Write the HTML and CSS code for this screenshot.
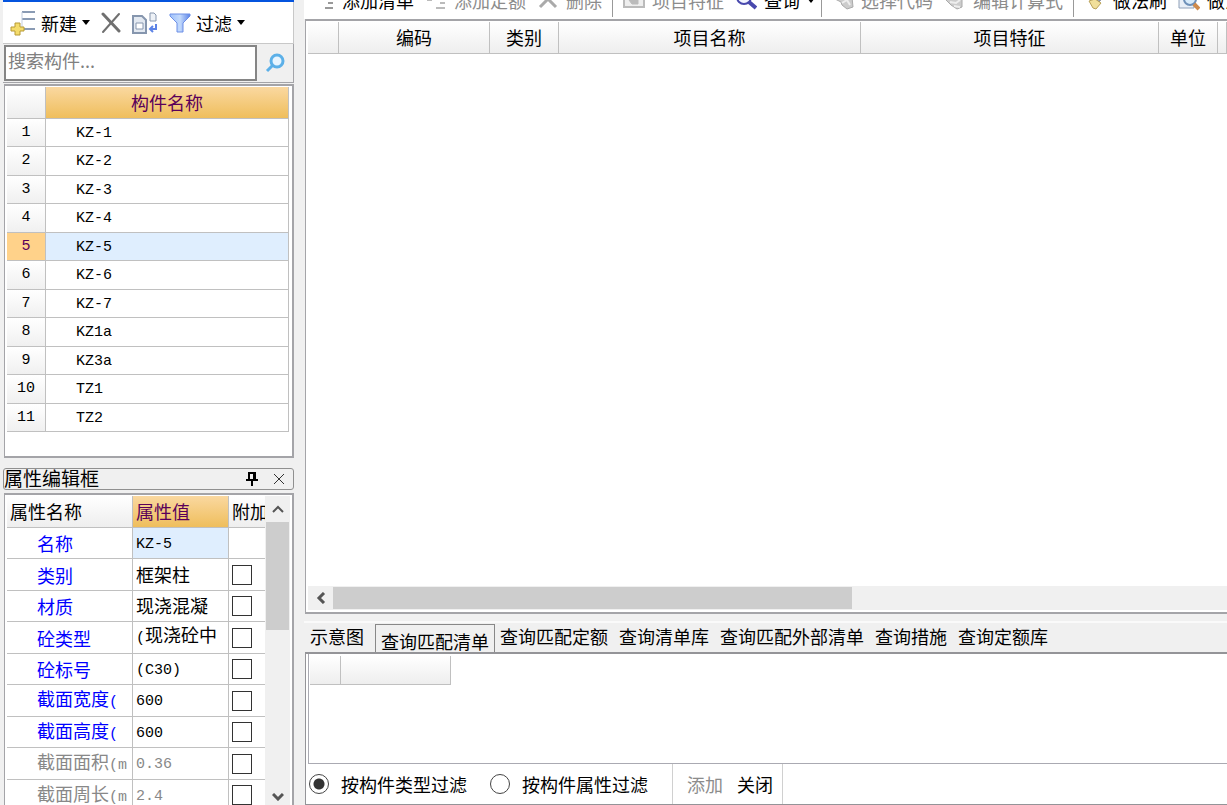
FILE: index.html
```html
<!DOCTYPE html>
<html lang="zh-CN">
<head>
<meta charset="utf-8">
<title>构件做法</title>
<link rel="stylesheet" href="styles.css">
</head>
<body>
<div class="app">
  <aside class="side">
    <section class="components">
      <div class="side-tools">
        <button class="tool" type="button">
          <svg width="26" height="26" viewBox="0 0 26 26" fill="none"><path d="M12 2h13M12 9h13M12 19h13" stroke="#8a9bb4" stroke-width="2"/><path d="M12 2v17" stroke="#c3cede"/><path d="M5 13h5v4h4v4h-4v4H5v-4H1v-4h4z" fill="#f4dc6c" stroke="#b79a35"/></svg>
          <span>新建</span><i class="caret"></i>
        </button>
        <button class="tool" type="button" aria-label="删除">
          <svg width="20" height="22" viewBox="0 0 20 22" fill="none" stroke="#707070" stroke-linecap="round"><path d="M2 2l16 17" stroke-width="3"/><path d="M18 2L2 20" stroke-width="2"/></svg>
        </button>
        <button class="tool" type="button" aria-label="复制">
          <svg width="26" height="22" viewBox="0 0 26 22" fill="none"><path d="M1 4h9l4 4v13H1z" fill="#e3e9f1" stroke="#8696ae" stroke-width="2"/><path d="M4 11h7v6H4z" fill="#fff" stroke="#8696ae"/><path d="M18 1h4l2 2v6h-6z" fill="#eef2f7" stroke="#8696ae"/><path d="M24 12v5h-6m3-3l-3 3 3 3" stroke="#5d83e6" stroke-width="2"/></svg>
        </button>
        <button class="tool" type="button">
          <svg width="22" height="20" viewBox="0 0 22 20"><defs><linearGradient id="funnel"><stop offset="0" stop-color="#9fc1fb"/><stop offset=".5" stop-color="#c3dafc"/><stop offset="1" stop-color="#5b83e8"/></linearGradient></defs><path d="M1 1h20v2l-7 7v9H8v-9L1 3z" fill="url(#funnel)" stroke="#6d8fe6"/></svg>
          <span>过滤</span><i class="caret"></i>
        </button>
      </div>
      <div class="search">
        <input type="text" placeholder="搜索构件..." aria-label="搜索构件">
        <button type="button" aria-label="搜索">
          <svg width="20" height="20" viewBox="0 0 20 20" fill="none" stroke="#5cb0e8"><circle cx="12" cy="8" r="6" fill="#e8f5ff" stroke-width="3"/><path d="M8 12l-6 6" stroke-width="3"/></svg>
        </button>
      </div>
      <div class="frame list-frame">
        <table class="list">
          <thead><tr><th class="num"></th><th>构件名称</th></tr></thead>
          <tbody>
            <tr><th>1</th><td>KZ-1</td></tr>
            <tr><th>2</th><td>KZ-2</td></tr>
            <tr><th>3</th><td>KZ-3</td></tr>
            <tr><th>4</th><td>KZ-4</td></tr>
            <tr class="selected"><th>5</th><td>KZ-5</td></tr>
            <tr><th>6</th><td>KZ-6</td></tr>
            <tr><th>7</th><td>KZ-7</td></tr>
            <tr><th>8</th><td>KZ1a</td></tr>
            <tr><th>9</th><td>KZ3a</td></tr>
            <tr><th>10</th><td>TZ1</td></tr>
            <tr><th>11</th><td>TZ2</td></tr>
          </tbody>
        </table>
      </div>
    </section>
    <section class="properties">
      <header class="dock-title">
        <h2>属性编辑框</h2>
        <button type="button" aria-label="固定"><svg width="12" height="14" viewBox="0 0 12 14" fill="none" stroke="#000"><path d="M3 8V1h6v7" stroke-width="2"/><path d="M0 8h12M6 9v5" stroke-width="2"/><path d="M8 1v7" stroke-width="2"/></svg></button>
        <button type="button" aria-label="关闭"><svg width="12" height="12" viewBox="0 0 12 12" fill="none" stroke="#333"><path d="M1 1l10 10M11 1L1 11"/></svg></button>
      </header>
      <div class="frame prop-frame">
        <div class="prop-clip">
          <table class="props">
            <thead><tr><th class="name">属性名称</th><th class="value">属性值</th><th class="extra">附加</th></tr></thead>
            <tbody>
              <tr><th>名称</th><td class="active"><span class="latin">KZ-5</span></td><td></td></tr>
              <tr><th>类别</th><td>框架柱</td><td><input type="checkbox" aria-label="附加类别"></td></tr>
              <tr><th>材质</th><td>现浇混凝</td><td><input type="checkbox" aria-label="附加材质"></td></tr>
              <tr><th>砼类型</th><td><span class="latin">(</span>现浇砼中</td><td><input type="checkbox" aria-label="附加砼类型"></td></tr>
              <tr><th>砼标号</th><td><span class="latin">(C30)</span></td><td><input type="checkbox" aria-label="附加砼标号"></td></tr>
              <tr><th>截面宽度<span class="latin">(</span></th><td><span class="latin">600</span></td><td><input type="checkbox" aria-label="附加截面宽度"></td></tr>
              <tr><th>截面高度<span class="latin">(</span></th><td><span class="latin">600</span></td><td><input type="checkbox" aria-label="附加截面高度"></td></tr>
              <tr class="readonly"><th>截面面积<span class="latin">(m</span></th><td><span class="latin">0.36</span></td><td><input type="checkbox" aria-label="附加截面面积"></td></tr>
              <tr class="readonly"><th>截面周长<span class="latin">(m</span></th><td><span class="latin">2.4</span></td><td><input type="checkbox" aria-label="附加截面周长"></td></tr>
            </tbody>
          </table>
        </div>
        <div class="vscroll">
          <button type="button" aria-label="向上"><svg width="12" height="8" viewBox="0 0 12 8" fill="none" stroke="#555" stroke-width="2"><path d="M1 7l5-5 5 5"/></svg></button>
          <div class="vthumb"></div>
          <button type="button" aria-label="向下"><svg width="12" height="8" viewBox="0 0 12 8" fill="none" stroke="#555" stroke-width="3"><path d="M1 1l5 5 5-5"/></svg></button>
        </div>
      </div>
    </section>
  </aside>

  <main class="main">
    <div class="main-tools">
      <button class="tool" type="button"><svg width="22" height="22" viewBox="0 0 22 22" fill="none" stroke="#999"><path d="M12 4h10M12 10h8M15 14h5M12 19h8" stroke-width="2"/></svg><span>添加清单</span></button>
      <button class="tool" type="button" disabled><svg width="22" height="22" viewBox="0 0 22 22" fill="none" stroke="#bbb"><path d="M12 4h10M12 10h8M15 14h5M11 19h9M2 11h5" stroke-width="2"/></svg><span>添加定额</span></button>
      <button class="tool" type="button" disabled><svg width="22" height="22" viewBox="0 0 22 22" fill="none" stroke="#aaa" stroke-width="3"><path d="M3 2l16 16M19 2L3 18"/></svg><span>删除</span></button>
      <i class="sep"></i>
      <button class="tool" type="button" disabled><svg width="22" height="22" viewBox="0 0 22 22" fill="none" stroke="#bbb"><path d="M1 3h20v15H1z" fill="#eee" stroke-width="2"/><path d="M9 15l-3-4 3-4v3h6v5z" fill="#bbb"/></svg><span>项目特征</span></button>
      <button class="tool" type="button"><svg width="22" height="22" viewBox="0 0 22 22" fill="none" stroke="#4848ad"><circle cx="9" cy="8" r="7" fill="#f2f5ff" stroke-width="2"/><path d="M14 13l7 6" stroke-width="4"/></svg><span>查询</span><i class="caret"></i></button>
      <i class="sep"></i>
      <button class="tool" type="button" disabled><svg width="22" height="22" viewBox="0 0 22 22"><path d="M1 9c4-3 8-2 11 1l8-2 1 10-6 2-5-4-1-3z" fill="#ccc" stroke="#aaa"/><path d="M10 14l5-3 3 5" fill="none" stroke="#eee" stroke-width="2"/></svg><span>选择代码</span></button>
      <button class="tool" type="button" disabled><svg width="22" height="22" viewBox="0 0 22 22"><path d="M1 10c4-3 8-2 10 0l7-2v10l-5 2-6-4z" fill="#ccc" stroke="#aaa"/><path d="M6 13l6 1 4-3M10 17l6 1" fill="none" stroke="#eee" stroke-width="2"/></svg><span>编辑计算式</span></button>
      <i class="sep"></i>
      <button class="tool" type="button"><svg width="22" height="22" viewBox="0 0 22 22"><path d="M12 10l7-9 3 3-7 9z" fill="#9ba4b8" stroke="#6e7688"/><path d="M5 12l6-2 6 4-5 6-3-1z" fill="#f1df9b" stroke="#b9a25a"/></svg><span>做法刷</span></button>
      <button class="tool" type="button"><svg width="22" height="22" viewBox="0 0 22 22" fill="none"><path d="M1 1h15v18H1z" fill="#e9eff7" stroke="#8fa0b8"/><circle cx="12" cy="10" r="6" fill="#d8ebfa" stroke="#6e90b8" stroke-width="2"/><path d="M16 15l5 5" stroke="#cf8a4b" stroke-width="4"/></svg><span>做法查询</span></button>
    </div>
    <div class="frame grid-frame">
      <div class="grid-clip">
        <table class="grid">
          <thead><tr><th class="c-mark"></th><th class="c-code">编码</th><th class="c-kind">类别</th><th class="c-name">项目名称</th><th class="c-feature">项目特征</th><th class="c-unit">单位</th><th></th></tr></thead>
        </table>
      </div>
      <div class="hscroll">
        <button type="button" aria-label="向左"><svg width="10" height="12" viewBox="0 0 10 12" fill="none" stroke="#555" stroke-width="3"><path d="M8 1L3 6l5 5"/></svg></button>
        <div class="htrack"><div class="hthumb"></div></div>
      </div>
    </div>
    <section class="query">
      <nav class="tabs">
        <button type="button">示意图</button>
        <button type="button" class="current">查询匹配清单</button>
        <button type="button">查询匹配定额</button>
        <button type="button">查询清单库</button>
        <button type="button">查询匹配外部清单</button>
        <button type="button">查询措施</button>
        <button type="button">查询定额库</button>
      </nav>
      <div class="query-body">
        <div class="result">
          <table class="result-head"><thead><tr><th class="c-mark"></th><th class="c-result"></th></tr></thead></table>
        </div>
        <div class="filters">
          <label><input type="radio" name="filter" checked>按构件类型过滤</label>
          <label><input type="radio" name="filter">按构件属性过滤</label>
          <div class="actions">
            <button type="button" disabled>添加</button>
            <button type="button">关闭</button>
          </div>
        </div>
      </div>
    </section>
  </main>
</div>
</body>
</html>
```
FILE: styles.css
```css
* { box-sizing: border-box; }

body {
  margin: 0;
  background: #f0f0f0;
  color: #000;
  font: 18px/22px "Noto Sans CJK SC", sans-serif;
}

button {
  display: flex;
  align-items: center;
  justify-content: center;
  flex: none;
  padding: 0;
  border: 0;
  background: none;
  color: inherit;
  font: inherit;
  white-space: nowrap;
}

button:disabled { color: #8c8c8c; }
svg { display: block; flex: none; }

table {
  border-collapse: separate;
  border-spacing: 0;
  table-layout: fixed;
  width: 100%;
}

th, td {
  padding: 0;
  font-weight: 400;
  white-space: nowrap;
  border: solid #c0c0c0;
  border-width: 0 1px 1px 0;
}

thead th { background: linear-gradient(#fff, #eee); }

.latin { font: 15px/20px "Liberation Mono", monospace; }

.app {
  display: flex;
  gap: 10px;
  height: 100vh;
  padding-left: 3px;
  overflow: hidden;
}

.side {
  display: flex;
  flex-direction: column;
  gap: 10px;
  flex: none;
  width: 291px;
}

.frame {
  border: 2px solid #a4a4a8;
  border-left-width: 1px;
  background: #fff;
}

/* Component list */
.components {
  border-top: 2px solid #0454de;
}

.side-tools {
  display: flex;
  align-items: center;
  gap: 11px;
  height: 42px;
  padding-left: 7px;
  background: #fff;
  border: solid #c8c8c8;
  border-width: 0 1px 1px 0;
}

.tool { gap: 5px; }

.caret {
  border: solid transparent;
  border-top-color: #000;
  border-width: 5px 4px 0;
}

.search {
  display: flex;
  height: 39px;
  padding: 1px 0 1px 1px;
  border: solid #a4a4a8;
  border-width: 0 1px 1px 0;
}

.search input {
  flex: 1;
  min-width: 0;
  padding: 0 2px 6px;
  border: 2px solid #858585;
  border-radius: 0;
  background: #fff;
  font: inherit;
  outline: 0;
}

.search input::placeholder { color: #808080; opacity: 1; }
.search button { width: 36px; }

.list-frame {
  margin: 1px 0 0 1px;
  padding: 1px 3px 24px 2px;
}

.list .num { width: 39px; }
.list thead th { height: 32px; padding-bottom: 2px; }

.list thead th + th {
  background: linear-gradient(#fad8a0, #efbe5c);
  color: #5a005a;
}

.list tbody { font: 15px/22px "Liberation Mono", monospace; }
.list tbody tr { height: 28px; }
.list tbody tr:nth-child(even) { height: 29px; }
.list tbody th { background: linear-gradient(#fff, #f0f0f0); }
.list td { padding: 2px 0 0 30px; }
.list .selected th { background: #ffd28a; color: #5a005a; }
.list .selected td { background: #dfeefe; }

/* Property editor */
.properties {
  display: flex;
  flex-direction: column;
  gap: 3px;
  flex: 1;
  min-height: 0;
}

.dock-title {
  display: flex;
  align-items: center;
  gap: 15px;
  height: 22px;
  padding-right: 8px;
  border: 1px solid #909090;
  border-radius: 3px;
}

.dock-title h2 {
  flex: 1;
  margin: 0;
  padding-bottom: 3px;
  font: 19px/20px "Noto Sans CJK SC", sans-serif;
}

.prop-frame {
  display: flex;
  flex: 1;
  min-height: 0;
  margin-left: 1px;
  padding: 1px 2px 0;
  border-bottom: 0;
}

.prop-clip {
  flex: 1;
  min-width: 0;
  overflow: hidden;
}

.props .name { width: 126px; }
.props .value { width: 96px; }
.props thead th { height: 32px; padding: 0 0 2px 3px; text-align: left; }
.props th:last-child, .props td:last-child { border-right: 0; }

.props thead .value {
  background: linear-gradient(#fad8a0, #efbe5c);
  color: #5a005a;
}

.props tbody tr { height: 31px; line-height: 20px; }
.props tbody tr:nth-child(even) { height: 32px; }
.props tbody th { padding-left: 30px; color: #00f; text-align: left; }
.props td { padding: 0 0 2px 3px; }
.props td:last-child { padding-bottom: 0; }
.props .active { background: #dfeefe; }
.props .readonly th, .props .readonly td { color: #888; }

.props input {
  display: block;
  appearance: none;
  width: 20px;
  height: 20px;
  margin: 0;
  border: 1px solid #333;
  background: #fff;
}

.vscroll {
  display: flex;
  flex-direction: column;
  width: 25px;
  background: #f0f0f0;
}

.vscroll button { height: 26px; }
.vscroll button:last-child { height: 16px; margin-top: auto; }
.vthumb { height: 108px; margin: 0 1px; background: #cdcdcd; }

/* Measure table */
.main {
  display: flex;
  flex-direction: column;
  flex: 1;
  min-width: 0;
}

.main-tools {
  display: flex;
  align-items: flex-end;
  gap: 11px;
  height: 19px;
  padding: 0 0 2px 9px;
  overflow: hidden;
  background: #fff;
}

.main-tools .tool { gap: 7px; margin-bottom: 6px; }
.main-tools .caret { margin-right: -4px; }
.sep { flex: none; width: 1px; height: 17px; margin: 0 -1px; background: #999; }

.grid-frame {
  display: flex;
  flex-direction: column;
  flex: 1;
  min-height: 0;
  margin-left: 1px;
  padding: 1px 0 2px 2px;
  border-right: 0;
}

.grid-clip { flex: 1; overflow: hidden; }
.grid th { height: 32px; padding-bottom: 1px; }
.c-mark { width: 31px; }
.c-code { width: 151px; }
.c-kind { width: 69px; }
.c-name { width: 302px; }
.c-feature { width: 298px; }
.c-unit { width: 59px; }

.hscroll { display: flex; height: 24px; background: #f0f0f0; }
.hscroll button { width: 25px; }
.htrack { flex: 1; padding: 1px 0; }
.hthumb { width: 58%; height: 22px; background: #cdcdcd; }

/* Query panel */
.query { margin-top: 7px; }

.tabs {
  display: flex;
  gap: 11px;
  height: 31px;
  padding-left: 6px;
  border-top: 2px solid #fafafa;
}

.tabs button { height: 25px; }

.tabs .current {
  height: 28px;
  margin: 1px -6px 0 0;
  padding: 4px 5px 0;
  border: 1px solid #888;
  border-bottom: 0;
}

.query-body {
  margin-left: 1px;
  padding-left: 2px;
  border: 2px solid #949498;
  border-width: 2px 0 1px 1px;
  background: #fff;
}

.result {
  height: 110px;
  padding: 2px 0 0 1px;
  border: solid #aaaab2;
  border-width: 0 0 1px 1px;
}

.result-head { width: auto; }
.result-head th { height: 29px; }
.c-result { width: 110px; }

.filters {
  display: flex;
  align-items: stretch;
  gap: 22px;
  height: 40px;
}

.filters label { display: flex; align-items: center; gap: 12px; }

.filters input {
  appearance: none;
  width: 20px;
  height: 20px;
  margin: 0 0 0 1px;
  border: 1px solid #444;
  border-radius: 50%;
  background: #fff;
}

.filters input:checked { background: radial-gradient(circle, #333 5px, #fff 6px); }

.actions {
  display: flex;
  gap: 14px;
  margin-left: 2px;
  padding: 0 9px 0 14px;
  border: solid #d0d0d0;
  border-width: 0 1px;
}
```
